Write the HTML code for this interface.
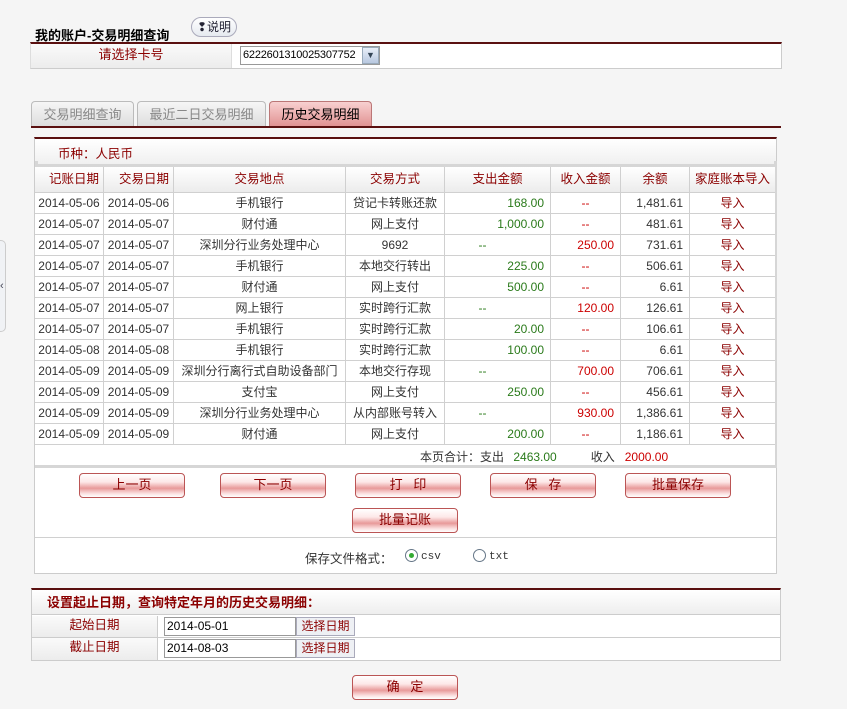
<!DOCTYPE html>
<html><head><meta charset="utf-8">
<style>
*{margin:0;padding:0;box-sizing:border-box}
body{width:847px;height:709px;background:#f5f5f5;font-family:"Liberation Sans","Noto Sans CJK SC",sans-serif;font-size:12px;color:#333;position:relative;overflow:hidden}
.a{position:absolute}
.red{color:#8b0000}
.btn{position:absolute;width:106px;height:25px;border:1px solid #b55;border-radius:4px;background:linear-gradient(#fff 0%,#fde8e8 35%,#e89a9a 62%,#fbe0e0 85%,#fff 100%);color:#8b0000;text-align:center;line-height:22px;font-size:13px}
.row{position:absolute;left:35px;width:740px;height:21px;border-bottom:1px solid #d0d0d0;background:#fff}
.row div,.hd div{position:absolute;top:0;height:100%;border-right:1px solid #d0d0d0;line-height:20px;white-space:nowrap;overflow:hidden}
.c1{left:0;width:69px;text-align:center}
.c2{left:69px;width:70px;text-align:center}
.c3{left:139px;width:172px;text-align:center}
.c4{left:311px;width:99px;text-align:center}
.c5{left:410px;width:106px;text-align:right;padding-right:6px}
.c6{left:516px;width:70px;text-align:center}
.c7{left:586px;width:69px;text-align:right;padding-right:6px}
.c8{left:655px;width:85px;text-align:center;color:#8b0000;border-right:none!important}
.g{color:#2a7a1a}.r{color:#c00}
.hd{position:absolute;left:35px;top:164px;width:740px;height:29px;background:linear-gradient(#fff,#ececec);border-top:3px solid #d6d6d6;border-bottom:1px solid #d0d0d0}
.hd div{line-height:24px;color:#8b0000;font-size:12.5px}
.hd .c5,.hd .c7{text-align:center;padding:0}
.hd .c1,.hd .c2{text-align:right;padding-right:4px}
.tab{position:absolute;top:101px;height:26px;border:1px solid #bbb;border-bottom:none;border-radius:4px 4px 0 0;background:linear-gradient(#f6f6f6,#dcdcdc);color:#888;font-size:13px;text-align:center;line-height:25px}
.inp{position:absolute;width:132px;height:19px;border:1px solid #999;background:#fff;font-size:12px;line-height:17px;padding-left:2px;color:#000}
.sb{position:absolute;width:59px;height:19px;border:1px solid #aab;background:#eef0f4;color:#8b0000;font-size:12px;text-align:center;line-height:17px}
.dash{text-align:center!important;padding-right:30px!important}
</style></head><body>

<div class="a" style="left:0;top:240px;width:6px;height:92px;border:1px solid #ccc;border-left:none;border-radius:0 5px 5px 0;background:#f0f2f5;color:#445;font-size:11px;line-height:90px">‹</div>

<div class="a" style="left:35px;top:25px;font-size:13px;font-weight:bold;color:#000">我的账户-交易明细查询</div>
<div class="a" style="left:191px;top:17px;width:46px;height:20px;border:1px solid #aab;border-radius:10px;background:linear-gradient(#fff,#e6eaf0);font-size:12px;line-height:18px;text-align:center;color:#223">❢说明</div>

<div class="a" style="left:30px;top:42px;width:752px;height:27px;border-top:2px solid #5a1010;border-bottom:1px solid #ccc;border-right:1px solid #ccc;border-left:1px solid #ddd;background:#fff"></div>
<div class="a" style="left:31px;top:44px;width:201px;height:24px;background:linear-gradient(#fafafa,#ececec);border-right:1px solid #ddd;color:#8b0000;text-align:center;line-height:22px;font-size:13px">请选择卡号</div>
<div class="a" style="left:240px;top:46px;width:140px;height:19px;border:1px solid #999;background:#fff;font-size:11px;line-height:17px;padding-left:2px;color:#000;letter-spacing:-0.2px">6222601310025307752</div>
<div class="a" style="left:362px;top:47px;width:17px;height:17px;background:linear-gradient(#e8eef8,#b8c8e0);border:1px solid #9ab;color:#345;font-size:9px;text-align:center;line-height:15px">▼</div>

<div class="tab" style="left:31px;width:103px">交易明细查询</div>
<div class="tab" style="left:137px;width:129px">最近二日交易明细</div>
<div class="tab" style="left:269px;width:103px;background:linear-gradient(#f8d0d0,#e09090);color:#000;border-color:#b77">历史交易明细</div>
<div class="a" style="left:31px;top:126px;width:750px;height:2px;background:#5a1010"></div>

<div class="a" style="left:34px;top:137px;width:743px;height:437px;background:#fff;border:1px solid #ccc;border-top:2px solid #5a1010"></div>
<div class="a" style="left:35px;top:139px;width:741px;height:25px;background:linear-gradient(#fff,#f0f0f0)"></div>
<div class="a red" style="left:58px;top:143px;font-size:12.5px">币种：人民币</div>
<div class="a" style="left:35px;top:161px;width:3px;height:307px;background:#d6d6d6"></div>
<div class="a" style="left:774px;top:161px;width:3px;height:307px;background:#d6d6d6"></div>

<div class="hd"><div class="c1">记账日期</div><div class="c2">交易日期</div><div class="c3">交易地点</div><div class="c4">交易方式</div><div class="c5">支出金额</div><div class="c6">收入金额</div><div class="c7" style="text-align:center">余额</div><div class="c8">家庭账本导入</div></div>

<div class="row" style="top:193px"><div class="c1">2014-05-06</div><div class="c2">2014-05-06</div><div class="c3">手机银行</div><div class="c4">贷记卡转账还款</div><div class="c5 g">168.00</div><div class="c6 r">--</div><div class="c7">1,481.61</div><div class="c8">导入</div></div>
<div class="row" style="top:214px"><div class="c1">2014-05-07</div><div class="c2">2014-05-07</div><div class="c3">财付通</div><div class="c4">网上支付</div><div class="c5 g">1,000.00</div><div class="c6 r">--</div><div class="c7">481.61</div><div class="c8">导入</div></div>
<div class="row" style="top:235px"><div class="c1">2014-05-07</div><div class="c2">2014-05-07</div><div class="c3">深圳分行业务处理中心</div><div class="c4">9692</div><div class="c5 g dash">--</div><div class="c6 r" style="text-align:right;padding-right:6px">250.00</div><div class="c7">731.61</div><div class="c8">导入</div></div>
<div class="row" style="top:256px"><div class="c1">2014-05-07</div><div class="c2">2014-05-07</div><div class="c3">手机银行</div><div class="c4">本地交行转出</div><div class="c5 g">225.00</div><div class="c6 r">--</div><div class="c7">506.61</div><div class="c8">导入</div></div>
<div class="row" style="top:277px"><div class="c1">2014-05-07</div><div class="c2">2014-05-07</div><div class="c3">财付通</div><div class="c4">网上支付</div><div class="c5 g">500.00</div><div class="c6 r">--</div><div class="c7">6.61</div><div class="c8">导入</div></div>
<div class="row" style="top:298px"><div class="c1">2014-05-07</div><div class="c2">2014-05-07</div><div class="c3">网上银行</div><div class="c4">实时跨行汇款</div><div class="c5 g dash">--</div><div class="c6 r" style="text-align:right;padding-right:6px">120.00</div><div class="c7">126.61</div><div class="c8">导入</div></div>
<div class="row" style="top:319px"><div class="c1">2014-05-07</div><div class="c2">2014-05-07</div><div class="c3">手机银行</div><div class="c4">实时跨行汇款</div><div class="c5 g">20.00</div><div class="c6 r">--</div><div class="c7">106.61</div><div class="c8">导入</div></div>
<div class="row" style="top:340px"><div class="c1">2014-05-08</div><div class="c2">2014-05-08</div><div class="c3">手机银行</div><div class="c4">实时跨行汇款</div><div class="c5 g">100.00</div><div class="c6 r">--</div><div class="c7">6.61</div><div class="c8">导入</div></div>
<div class="row" style="top:361px"><div class="c1">2014-05-09</div><div class="c2">2014-05-09</div><div class="c3">深圳分行离行式自助设备部门</div><div class="c4">本地交行存现</div><div class="c5 g dash">--</div><div class="c6 r" style="text-align:right;padding-right:6px">700.00</div><div class="c7">706.61</div><div class="c8">导入</div></div>
<div class="row" style="top:382px"><div class="c1">2014-05-09</div><div class="c2">2014-05-09</div><div class="c3">支付宝</div><div class="c4">网上支付</div><div class="c5 g">250.00</div><div class="c6 r">--</div><div class="c7">456.61</div><div class="c8">导入</div></div>
<div class="row" style="top:403px"><div class="c1">2014-05-09</div><div class="c2">2014-05-09</div><div class="c3">深圳分行业务处理中心</div><div class="c4">从内部账号转入</div><div class="c5 g dash">--</div><div class="c6 r" style="text-align:right;padding-right:6px">930.00</div><div class="c7">1,386.61</div><div class="c8">导入</div></div>
<div class="row" style="top:424px"><div class="c1">2014-05-09</div><div class="c2">2014-05-09</div><div class="c3">财付通</div><div class="c4">网上支付</div><div class="c5 g">200.00</div><div class="c6 r">--</div><div class="c7">1,186.61</div><div class="c8">导入</div></div>
<div class="a" style="left:35px;top:445px;width:740px;height:23px;background:#fff;border-bottom:3px solid #d6d6d6"></div>
<div class="a" style="left:420px;top:448px;font-size:12px">本页合计：支出 <span class="g" style="margin-left:6px">2463.00</span><span style="margin-left:34px">收入</span><span class="r" style="margin-left:10px">2000.00</span></div>

<div class="btn" style="left:79px;top:473px">上一页</div>
<div class="btn" style="left:220px;top:473px">下一页</div>
<div class="btn" style="left:355px;top:473px">打&nbsp;&nbsp;&nbsp;印</div>
<div class="btn" style="left:490px;top:473px">保&nbsp;&nbsp;&nbsp;存</div>
<div class="btn" style="left:625px;top:473px">批量保存</div>
<div class="btn" style="left:352px;top:508px">批量记账</div>
<div class="a" style="left:35px;top:537px;width:741px;height:1px;background:#d0d0d0"></div>
<div class="a" style="left:305px;top:548px;font-size:12.5px">保存文件格式：</div>
<div class="a" style="left:405px;top:549px;width:13px;height:13px;border:1px solid #678;border-radius:50%;background:#fff"><div class="a" style="left:3px;top:3px;width:5px;height:5px;border-radius:50%;background:#3a3"></div></div>
<div class="a" style="left:421px;top:550px;font-size:11px;line-height:14px;font-family:'Liberation Mono',monospace">csv</div>
<div class="a" style="left:473px;top:549px;width:13px;height:13px;border:1px solid #678;border-radius:50%;background:#fff"></div>
<div class="a" style="left:489px;top:550px;font-size:11px;line-height:14px;font-family:'Liberation Mono',monospace">txt</div>

<div class="a" style="left:31px;top:588px;width:750px;height:73px;background:#fff;border:1px solid #ccc;border-top:2px solid #5a1010"></div>
<div class="a" style="left:32px;top:590px;width:748px;height:25px;background:linear-gradient(#fff,#eee);border-bottom:1px solid #ccc"></div>
<div class="a red" style="left:47px;top:592px;font-size:13px;font-weight:bold">设置起止日期，查询特定年月的历史交易明细：</div>
<div class="a" style="left:32px;top:616px;width:126px;height:21px;background:linear-gradient(#fafafa,#ececec);border-right:1px solid #ccc;color:#8b0000;text-align:center;line-height:18px;font-size:12.5px">起始日期</div>
<div class="a" style="left:32px;top:637px;width:748px;height:1px;background:#ccc"></div>
<div class="a" style="left:32px;top:638px;width:126px;height:22px;background:linear-gradient(#fafafa,#ececec);border-right:1px solid #ccc;color:#8b0000;text-align:center;line-height:18px;font-size:12.5px">截止日期</div>
<div class="inp" style="left:164px;top:617px">2014-05-01</div>
<div class="sb" style="left:296px;top:617px">选择日期</div>
<div class="inp" style="left:164px;top:639px">2014-08-03</div>
<div class="sb" style="left:296px;top:639px">选择日期</div>

<div class="btn" style="left:352px;top:675px">确&nbsp;&nbsp;&nbsp;定</div>
</body></html>
